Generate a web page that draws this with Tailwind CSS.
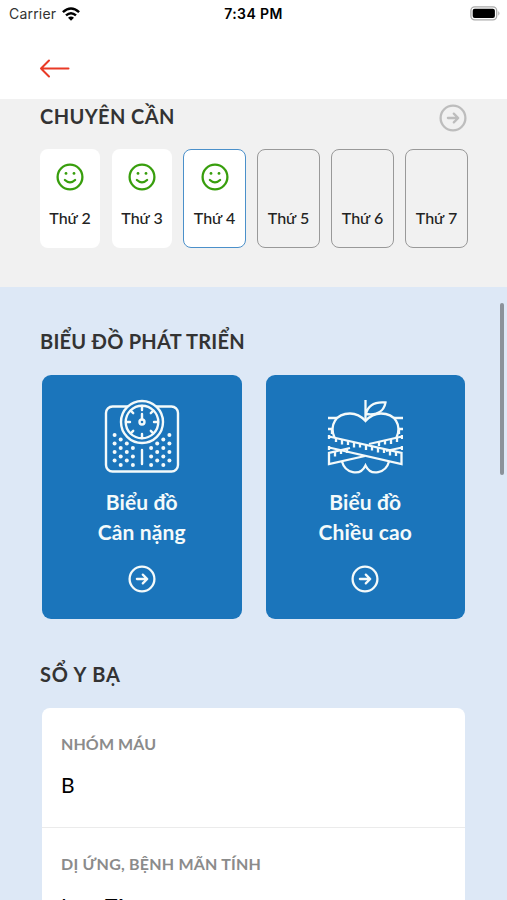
<!DOCTYPE html>
<html lang="vi">
<head>
<meta charset="utf-8">
<title>Sổ bé</title>
<script src="https://cdn.jsdelivr.net/npm/@tailwindcss/browser@4"></script>
</head>
<body class="bg-white">
<svg class="hidden">
  <defs>
    <symbol id="go" viewBox="0 0 28 28"><g fill="none" stroke="currentColor" stroke-width="2.3" stroke-linecap="round" stroke-linejoin="round"><circle cx="14" cy="14" r="12.4"/><path d="M8.9 14h10M14.8 9.6l4.4 4.4-4.4 4.4"/></g></symbol>
    <symbol id="smile" viewBox="0 0 28 28"><g fill="none" stroke="currentColor" stroke-width="2.3" stroke-linecap="round"><circle cx="14" cy="14" r="12.4"/><path d="M8.900 17q5.100 4.800 10.200 0"/></g><circle cx="10" cy="10.400" r="1.400" fill="currentColor"/><circle cx="18" cy="10.400" r="1.400" fill="currentColor"/></symbol>
  </defs>
</svg>
<main class="relative flex h-[900px] w-[507px] flex-col overflow-hidden font-['Lato','Noto_Sans',sans-serif] text-[#333]">
  <header class="h-[99px] shrink-0 bg-white">
    <div class="grid h-[27px] grid-cols-3 items-center pr-[6px] pl-[9px] font-['Inter',sans-serif] text-[14px] text-[#222]">
      <div class="flex items-center gap-[6px]"><span class="tracking-[0.2px] text-[#333]">Carrier</span>
        <svg class="h-[14px] w-[18px]" viewBox="0 0 18 14" fill="none" stroke="#000" stroke-width="2.5"><path d="M.9 5.2Q9-2.2 17.1 5.2M4 8.4Q9 4 14 8.4"/><path d="M6 10.8Q9 8.2 12 10.8L9 13.8Z" fill="#000" stroke="none"/></svg>
      </div>
      <span class="text-center font-semibold tracking-[0.4px] text-black -ml-[3px]">7:34 PM</span>
      <svg class="h-[15px] w-[31px] justify-self-end" viewBox="0 0 31 15"><rect x=".9" y=".9" width="25.8" height="13" rx="3.8" fill="#fff" stroke="#aaa" stroke-width="1.3"/><rect x="2.7" y="2.7" width="22.2" height="9.4" rx="2" fill="#000"/><path d="M28.3 5v4.8q2.4-2.4 0-4.8" fill="#aaa"/></svg>
    </div>
    <svg class="mt-[32px] ml-[39px] h-5 w-8" viewBox="0 0 32 20" fill="none" stroke="#e93a26" stroke-width="2" stroke-linecap="round" stroke-linejoin="round"><path d="M29.5 9.500H2M10 1.500L2 9.500l8 8"/></svg>
  </header>

  <section class="h-[188px] shrink-0 bg-[#f1f1f1] pr-[39px] pl-10">
    <div class="flex h-[50px] items-start justify-between">
      <h2 class="mt-[3px] text-[20px] leading-[28px] font-bold tracking-[0.4px] whitespace-nowrap">CHUYÊN CẦN</h2>
      <svg class="mt-[5px] mr-px h-7 w-7 text-[#bdbdbd]"><use href="#go"/></svg>
    </div>
    <div class="flex h-[99px] text-[16px] font-medium text-[#222]">
      <div class="flex w-[60px] flex-col items-center rounded-lg bg-white pt-[14px]"><svg class="h-7 w-7 text-[#389e0d]"><use href="#smile"/></svg><span class="mt-[15px]">Thứ 2</span></div>
      <div class="ml-3 flex w-[60px] flex-col items-center rounded-lg bg-white pt-[14px]"><svg class="h-7 w-7 text-[#389e0d]"><use href="#smile"/></svg><span class="mt-[15px]">Thứ 3</span></div>
      <div class="ml-[11px] flex w-[63px] flex-col items-center rounded-lg border-[1.5px] border-[#4b90ca] bg-white pt-[13px]"><svg class="h-7 w-7 text-[#389e0d]"><use href="#smile"/></svg><span class="mt-[15px]">Thứ 4</span></div>
      <div class="ml-[11px] flex w-[63px] flex-col items-center rounded-lg border-[1.5px] border-[#999] pt-[56px]"><span>Thứ 5</span></div>
      <div class="ml-[11px] flex w-[63px] flex-col items-center rounded-lg border-[1.5px] border-[#999] pt-[56px]"><span>Thứ 6</span></div>
      <div class="ml-[11px] flex w-[63px] flex-col items-center rounded-lg border-[1.5px] border-[#999] pt-[56px]"><span>Thứ 7</span></div>
    </div>
  </section>

  <div class="flex-1 bg-[#dde8f6] px-10 pt-[40px]">
    <h2 class="text-[20px] leading-[28px] font-bold tracking-[0.25px] whitespace-nowrap">BIỂU ĐỒ PHÁT TRIỂN</h2>
    <div class="mt-[20px] flex gap-6 px-[2px] text-[21px] leading-[30px] font-bold text-[#f4fafa]">
      <div class="flex h-[244px] w-[200px] flex-col items-center rounded-[9px] bg-[#1b75bb] pt-[23px]">
        <svg class="h-[78px] w-[76px]" viewBox="0 0 76 78" fill="none" stroke="#f4fafa" stroke-width="2.4" stroke-linecap="round">
          <rect x="2" y="8.5" width="72" height="65" rx="6.5"/>
          <circle cx="38" cy="24" r="21" fill="#1b75bb"/><circle cx="38" cy="24" r="16.3"/>
          <path d="M38 8v4M38 36v4M22 24h4M50 24h4M26.7 12.7l2.5 2.5M46.8 32.8l2.5 2.5M49.3 12.7l-2.5 2.5M29.2 32.8l-2.5 2.5M38 16v5M38 52v14"/>
          <circle cx="38" cy="24" r="2.5"/>
          <g id="holes" stroke="none" fill="#f4fafa">
            <circle cx="10.6" cy="37" r="2"/><circle cx="10.6" cy="45.5" r="2"/><circle cx="10.6" cy="54" r="2"/><circle cx="10.6" cy="62.5" r="2"/>
            <circle cx="16.7" cy="41.5" r="2"/><circle cx="16.7" cy="50" r="2"/><circle cx="16.7" cy="58.5" r="2"/><circle cx="16.7" cy="67" r="2"/>
            <circle cx="22.8" cy="45.5" r="2"/><circle cx="22.8" cy="54" r="2"/><circle cx="22.8" cy="62.5" r="2"/>
            <circle cx="28.9" cy="50" r="2"/><circle cx="28.9" cy="58.5" r="2"/><circle cx="28.9" cy="67" r="2"/>
          </g>
          <use href="#holes" transform="translate(76 0) scale(-1 1)"/>
        </svg>
        <span class="mt-[11px] tracking-[0.15px]">Biểu đồ</span><span class="tracking-[0.15px]">Cân nặng</span>
        <svg class="mt-[18px] h-7 w-7"><use href="#go"/></svg>
      </div>
      <div class="flex h-[244px] w-[200px] flex-col items-center rounded-[9px] bg-[#1b75bb] pt-[23px]">
        <svg class="h-[78px] w-[76px]" viewBox="0 0 76 78" fill="none" stroke="#f4fafa" stroke-width="2.3">
          <path d="M38.500 2v21M39 16C41 7 47 3.500 58.500 4.500C57 13 50 17.500 39 16"/>
          <path d="M7.500 39.500C2 27 9 15.500 23 15.500C30 15.500 34 18 38.500 23C43 18 47 15.500 54 15.500C68 15.500 75 27 69.500 39.500"/>
          <path d="M1 20h9M1 31h4v5M76 20h-9M76 31h-4v5"/>
          <path d="M2 38.500L74.500 55V66L2 49.500M2 37v4M2 48v4"/>
          <path d="M75 38.500L42 46M75 49.500L59 53M23 50L2 55V66L38 58M75 37v4M75 48v4"/>
          <path d="M9 40v4M15 41.500v5M21 43v4M27 44.500v5M33 45.500v4M39 47v5M45 48.500v4M51 49.500v5M57 51v4M63 52.500v5M69 54v4M52 44v4M58 42.500v4M64 41v5M70 40v4M8 53.500v5M14 52v4M20 51v4"/>
          <path d="M15 63.500C18 75 33 79 38.500 67.500C44 79 59 75 62 63.500"/>
        </svg>
        <span class="mt-[11px] tracking-[0.15px]">Biểu đồ</span><span class="tracking-[0.15px]">Chiều cao</span>
        <svg class="mt-[18px] h-7 w-7"><use href="#go"/></svg>
      </div>
    </div>
    <h2 class="mt-[41px] text-[20px] leading-[28px] font-bold tracking-[0.8px] whitespace-nowrap">SỔ Y BẠ</h2>
    <div class="mx-[2px] mt-[20px] rounded-t-lg bg-white">
      <div class="h-[120px] border-b-[1.5px] border-[#ebebeb] px-[19px] pt-[24px]">
        <div class="text-[16px] leading-6 font-bold tracking-[0.1px] text-[#8b8b8b]">NHÓM MÁU</div>
        <div class="mt-[15px] text-[21px] leading-7 text-black">B</div>
      </div>
      <div class="h-[120px] px-[19px] pt-[24px]">
        <div class="text-[16px] leading-6 font-bold tracking-[0.22px] whitespace-nowrap text-[#8b8b8b]">DỊ ỨNG, BỆNH MÃN TÍNH</div>
        <div class="mt-[16px] text-[21px] leading-7 text-black">Lom Tôm</div>
      </div>
    </div>
  </div>
  <div class="absolute top-[303px] right-[3px] h-[172px] w-1 rounded-full bg-[#8b929a]"></div>
</main>
</body>
</html>
